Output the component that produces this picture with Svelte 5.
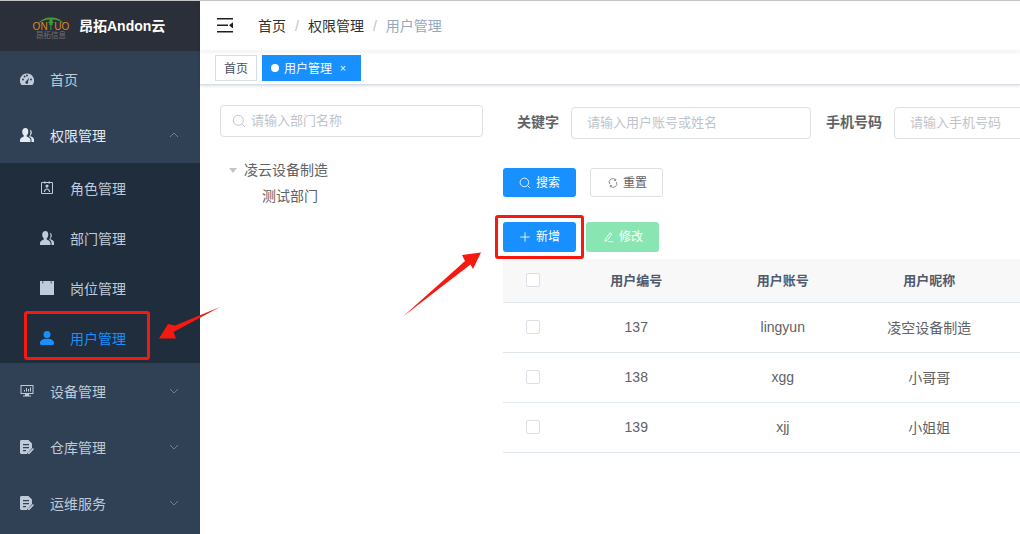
<script>
  const icons = {
    gauge: 'M7 1.500A7 7 0 0 0 1.600 13h10.800A7 7 0 0 0 7 1.500zM3 8.600a1 1 0 1 1 0-2 1 1 0 0 1 0 2zm1.600-3a1 1 0 1 1 0-2 1 1 0 0 1 0 2zm2.400-1a1 1 0 1 1 0-2 1 1 0 0 1 0 2zm0 7.400a1.600 1.600 0 0 1-.8-3l3.200-3.400-1.400 4.200A1.600 1.600 0 0 1 7 12zm4-3.400a1 1 0 1 1 0-2 1 1 0 0 1 0 2z',
    people: 'M5.500 0C3.500 0 2.200 1.600 2.200 3.800c0 1.500.6 2.800 1.600 3.600v1C2.400 9 0 10 0 12v2h10.500v-2c0-2-2.400-3-3.800-3.600v-1c1-.8 1.600-2.100 1.600-3.600C8.300 1.600 7.500 0 5.500 0zM9.500 1.500c1.500.3 2.300 1.500 2.300 3 0 1.200-.5 2.200-1.300 2.800v.9c1.200.5 3.500 1.400 3.500 3V14h-2.500v-2.300c0-1.300-1-2.400-2.300-3.200.8-1.100 1.300-2.600 1.300-4.200 0-1-.2-2-.8-2.800z',
    post: 'M0 0h2.500v2.500h.7V0h7.600v2.500h.7V0H14v14H0z',
    user: 'M7 0a3.500 3.500 0 1 1 0 7 3.500 3.500 0 0 1 0-7zM0 12c0-2.800 3-4.300 7-4.300s7 1.500 7 4.300v.8c0 .7-.5 1.200-1.200 1.200H1.200C.5 14 0 13.500 0 12.800z',
    doc: 'M1.500 0h7L12 3.500V8l-4.500 5-.5 1H1.500C.700 14 0 13.300 0 12.500v-11C0 .7.700 0 1.500 0zM3 4v1.300h6V4zm0 3v1.300h6V7zm0 3v1.300h3V10zM13 8l1 1-4.500 5H8v-1.200z'
  };
  const bottomMenu = [
    { label: '设备管理', icon: 'monitor' },
    { label: '仓库管理', icon: 'doc' },
    { label: '运维服务', icon: 'doc' }
  ];
  const subMenu = [
    { label: '角色管理', icon: 'role' },
    { label: '部门管理', icon: 'people' },
    { label: '岗位管理', icon: 'post' },
    { label: '用户管理', icon: 'user', active: true }
  ];
  const rows = [
    { id: 137, account: 'lingyun', nick: '凌空设备制造' },
    { id: 138, account: 'xgg', nick: '小哥哥' },
    { id: 139, account: 'xjj', nick: '小姐姐' }
  ];
</script>

{#snippet icon(name)}
  <svg class="mi" viewBox="0 0 14 14" aria-hidden="true">
    {#if name === 'role'}
      <path class="line" d="M1.500 1.500h11v11h-11z" />
      <path d="M4 .5h1.500v2H4zM8.500 .5H10v2H8.500zM7 3.500a1.600 1.600 0 1 1 0 3.200 1.600 1.600 0 0 1 0-3.200zM3.800 11c.2-2.200 1.400-3.600 3.200-3.600s3 1.400 3.200 3.600H9c-.2-1.300-.9-2.400-2-2.400S5.200 9.700 5 11z" />
    {:else if name === 'monitor'}
      <path d="M.5 1h13v9H9v1.500h2V12.500H3v-1h2V10H.5zM1.500 2v7h11V2zM4 7.500V6h1v1.500zM6 7.500V4h1v3.500zM8 7.500V5h1v2.500zM10 7.500V3.500h1v4z" />
    {:else}
      <path d={icons[name]} />
    {/if}
  </svg>
{/snippet}

{#snippet chevron(up)}
  <svg class="chev" viewBox="0 0 10 6" aria-hidden="true">
    <path d={up ? 'M1 5l4-4 4 4' : 'M1 1l4 4 4-4'} />
  </svg>
{/snippet}

<div class="shell">
  <aside class="sidebar">
    <div class="brand">
      <div class="logo">
        <svg class="arc" viewBox="0 0 32 9" aria-hidden="true">
          <path d="M3 8C6 3 11 1.500 16 1.500S26 3 29 8C25 4.500 21 3.500 17.500 3.500V9h-3V3.500C11 3.500 7 4.500 3 8z" />
        </svg>
        <span class="logo-en">ON<i>T</i>UO</span>
        <span class="logo-cn">昂拓信息</span>
      </div>
      <span class="brand-title">昂拓Andon云</span>
    </div>
    <div class="menu-item">{@render icon('gauge')}<span>首页</span></div>
    <div class="menu-item open">{@render icon('people')}<span>权限管理</span>{@render chevron(true)}</div>
    <div class="submenu">
      {#each subMenu as item}
        <div class="sub-item" class:active={item.active}>{@render icon(item.icon)}<span>{item.label}</span></div>
      {/each}
    </div>
    {#each bottomMenu as item}
      <div class="menu-item">{@render icon(item.icon)}<span>{item.label}</span>{@render chevron(false)}</div>
    {/each}
  </aside>

  <main class="main">
    <header class="navbar">
      <svg class="hamburger" viewBox="0 0 16 15" aria-hidden="true">
        <path d="M0 0h16v1.500H0zM0 6.500h11V8H0zM0 13h16v1.500H0zM16 4.200v6.200l-4-3.100z" />
      </svg>
      <nav class="crumbs">
        <span>首页</span><b>/</b><span>权限管理</span><b>/</b><span class="current">用户管理</span>
      </nav>
    </header>

    <div class="tags">
      <span class="tag">首页</span>
      <span class="tag on"><i class="dot"></i>用户管理<em>×</em></span>
    </div>

    <div class="content">
      <section class="tree-col">
        <div class="input tree-input">
          <svg class="search" viewBox="0 0 14 14" aria-hidden="true"><circle cx="6.300" cy="6.300" r="5" /><path d="M10 10l3 3" /></svg>
          <span class="ph">请输入部门名称</span>
        </div>
        <div class="tree-node root"><i class="caret"></i>凌云设备制造</div>
        <div class="tree-node child">测试部门</div>
      </section>

      <section class="list-col">
        <div class="query">
          <label for="kw">关键字</label>
          <div class="input wide" id="kw"><span class="ph">请输入用户账号或姓名</span></div>
          <label for="tel">手机号码</label>
          <div class="input wide" id="tel"><span class="ph">请输入手机号码</span></div>
        </div>

        <div class="actions query-actions">
          <span class="btn primary">
            <svg class="btn-i" viewBox="0 0 14 14" aria-hidden="true"><circle cx="6.300" cy="6.300" r="5" /><path d="M10 10l3 3" /></svg>搜索
          </span>
          <span class="btn plain reset">
            <svg class="btn-i small" viewBox="0 0 14 14" aria-hidden="true"><path d="M2.500 8.500A4.700 4.700 0 0 1 10.500 3M11.500 5.500A4.700 4.700 0 0 1 3.500 11M10.800 1v2.500H8.300M3.200 13v-2.500h2.500" /></svg>重置
          </span>
        </div>

        <div class="actions">
          <span class="btn primary">
            <svg class="btn-i" viewBox="0 0 14 14" aria-hidden="true"><path d="M7 1.500v11M1.500 7h11" /></svg>新增
          </span>
          <span class="btn success">
            <svg class="btn-i" viewBox="0 0 14 14" aria-hidden="true"><path d="M4 9.500L9.500 2l2 1.500L6 11l-2.500 1zM7 12.500h6" /></svg>修改
          </span>
        </div>

        <table>
          <colgroup><col class="c0" /><col class="c1" /><col class="c1" /><col class="c1" /><col class="c1" /></colgroup>
          <thead>
            <tr><th><i class="check"></i></th><th>用户编号</th><th>用户账号</th><th>用户昵称</th><th></th></tr>
          </thead>
          <tbody>
            {#each rows as row}
              <tr><td><i class="check"></i></td><td>{row.id}</td><td>{row.account}</td><td>{row.nick}</td><td></td></tr>
            {/each}
          </tbody>
        </table>
      </section>
    </div>
  </main>

  <div class="mark mark-menu"></div>
  <div class="mark mark-add"></div>
  <svg class="arrows" viewBox="0 0 1020 534" aria-hidden="true">
    <polygon points="220,307 175,325.500 168,324 159,338.500 176,338.500 173.500,332" />
    <polygon points="403,316.500 465,261 462,255 481,252.500 473,269 470.500,264.500" />
  </svg>
</div>

<style>
  :global(body) {
    margin: 0;
    overflow: hidden;
    background: #fff;
  }

  .shell {
    position: relative;
    display: flex;
    width: 1020px;
    height: 534px;
    box-sizing: border-box;
    border-top: 1px solid #c4c4c4;
    overflow: hidden;
    font-family: "Liberation Sans", "Noto Sans CJK SC", sans-serif;
    font-size: 14px;
    color: #606266;
  }

  .sidebar {
    flex: 0 0 200px;
    background: #304156;
    color: #bfcbd9;
  }

  .brand {
    display: flex;
    align-items: center;
    height: 50px;
    padding-left: 35px;
    background: #2b2f3a;
  }

  .logo {
    display: flex;
    flex-direction: column;
    align-items: center;
    width: 32px;
    margin: 4px 12px 0 0;
  }

  .arc {
    width: 32px;
    height: 9px;
    margin-bottom: -3px;
    fill: #3f9b39;
  }

  .logo-en {
    font-size: 10px;
    line-height: 9px;
    letter-spacing: .2px;
    color: #d98a1c;
  }

  .logo-en i {
    font-style: normal;
    color: #3f9b39;
  }

  .logo-cn {
    margin-top: 1px;
    font-size: 7.500px;
    line-height: 8px;
    color: #6d7077;
  }

  .brand-title {
    padding-bottom: 2px;
    font-size: 14px;
    font-weight: 700;
    color: #fff;
  }

  .menu-item,
  .sub-item {
    display: flex;
    align-items: center;
  }

  .menu-item {
    position: relative;
    height: 56px;
    padding-left: 20px;
  }

  .sub-item {
    height: 50px;
    padding-left: 40px;
  }

  .submenu {
    background: #1f2d3d;
  }

  .mi {
    flex: none;
    width: 14px;
    height: 14px;
    margin-right: 16px;
    fill: currentColor;
  }

  .line {
    fill: none;
    stroke: currentColor;
  }

  .open {
    color: #e4eaf2;
  }

  .active {
    color: #1890ff;
  }

  .chev {
    position: absolute;
    left: 169px;
    top: 25px;
    width: 10px;
    height: 6px;
    fill: none;
    stroke: #717e8e;
    stroke-width: 1;
  }

  .main {
    flex: 1;
    min-width: 0;
  }

  .navbar {
    position: relative;
    display: flex;
    align-items: center;
    height: 50px;
    padding-left: 17px;
    box-shadow: 0 1px 4px rgba(0, 21, 41, .08);
  }

  .hamburger {
    width: 16px;
    height: 15px;
    margin: 0 25px 1px 0;
    fill: #1f1f1f;
  }

  .crumbs {
    display: flex;
    align-items: baseline;
    padding-bottom: 2px;
    color: #303133;
  }

  .crumbs b {
    margin: 0 9px;
    font-weight: 400;
    color: #c0c4cc;
  }

  .crumbs .current {
    color: #97a8be;
  }

  .tags {
    position: relative;
    display: flex;
    gap: 5px;
    box-sizing: border-box;
    height: 34px;
    padding: 4px 0 0 15px;
    border-bottom: 1px solid #d8dce5;
    box-shadow: 0 1px 3px 0 rgba(0, 0, 0, .12), 0 0 3px 0 rgba(0, 0, 0, .04);
  }

  .tag {
    display: flex;
    align-items: center;
    box-sizing: border-box;
    height: 26px;
    padding: 0 8px 2px;
    border: 1px solid #d8dce5;
    font-size: 12px;
    color: #495060;
  }

  .tag.on {
    width: 99px;
    border-color: #1890ff;
    background: #1890ff;
    color: #fff;
  }

  .dot {
    width: 8px;
    height: 8px;
    margin: 2px 5px 0 0;
    border-radius: 50%;
    background: #fff;
  }

  .tag em {
    margin: 2px 0 0 8px;
    font-style: normal;
    font-size: 10px;
  }

  .content {
    display: flex;
    padding: 20px 0 0 20px;
  }

  .tree-col {
    flex: 0 0 263px;
    margin-right: 20px;
  }

  .input {
    display: flex;
    align-items: center;
    box-sizing: border-box;
    height: 32px;
    padding-bottom: 4px;
    border: 1px solid #dcdfe6;
    border-radius: 4px;
    background: #fff;
    font-size: 13px;
  }

  .tree-input {
    padding-left: 11px;
  }

  .search {
    flex: none;
    width: 14px;
    height: 14px;
    margin: 3px 5px 0 0;
    fill: none;
    stroke: #c0c4cc;
  }

  .ph {
    white-space: nowrap;
    color: #c0c4cc;
  }

  .tree-node {
    display: flex;
    align-items: center;
    height: 26px;
    padding-bottom: 2px;
    box-sizing: border-box;
  }

  .root {
    margin-top: 20px;
    padding-left: 9px;
  }

  .child {
    padding-left: 42px;
  }

  .caret {
    width: 0;
    height: 0;
    margin: 2px 7px 0 0;
    border-left: 4px solid transparent;
    border-right: 4px solid transparent;
    border-top: 5px solid #c0c4cc;
  }

  .list-col {
    flex: none;
    width: 800px;
  }

  .query {
    display: flex;
    align-items: center;
    margin-top: 2px;
  }

  .query label {
    margin-right: 12px;
    margin-bottom: 4px;
    font-weight: 700;
    white-space: nowrap;
  }

  .query label:first-child {
    margin-left: 14px;
  }

  .wide {
    flex: none;
    width: 240px;
    padding-left: 15px;
    margin-right: 15px;
  }

  .actions {
    display: flex;
    gap: 10px;
    margin-bottom: 7px;
  }

  .query-actions {
    gap: 14px;
    margin-top: 29px;
    margin-bottom: 25px;
  }

  .btn {
    display: flex;
    align-items: center;
    justify-content: center;
    box-sizing: border-box;
    width: 73px;
    height: 30px;
    padding-bottom: 3px;
    border-radius: 3px;
    font-size: 12px;
    color: #fff;
  }

  .query-actions .btn {
    height: 29px;
    padding-bottom: 2px;
  }

  .primary {
    background: #1890ff;
  }

  .success {
    background: #89e6b2;
  }

  .plain {
    border: 1px solid #dcdfe6;
    color: #606266;
  }

  .reset {
    padding-left: 2px;
  }

  .btn-i {
    width: 12px;
    height: 12px;
    margin: 2px 5px 0 0;
    fill: none;
    stroke: currentColor;
  }

  .small {
    width: 10px;
    height: 10px;
  }

  table {
    width: 646px;
    table-layout: fixed;
    border-collapse: collapse;
    text-align: center;
  }

  .c0 {
    width: 60px;
  }

  .c1 {
    width: 146.500px;
  }

  th {
    height: 43px;
    padding: 0 0 2px;
    box-sizing: border-box;
    border-bottom: 1px solid #dfe6ec;
    background: #f8f8f9;
    font-size: 13px;
    font-weight: 700;
    color: #515a6e;
  }

  th .check {
    position: relative;
    top: 1px;
  }

  td {
    height: 50px;
    padding: 0;
    box-sizing: border-box;
    border-bottom: 1px solid #dfe6ec;
  }

  .check {
    display: block;
    box-sizing: border-box;
    width: 14px;
    height: 14px;
    margin: 0 auto;
    border: 1px solid #dcdfe6;
    border-radius: 2px;
    background: #fff;
  }

  .mark {
    position: absolute;
    box-sizing: border-box;
    border: 3px solid #f5190f;
    border-radius: 3px;
  }

  .mark-menu {
    left: 24px;
    top: 310px;
    width: 126px;
    height: 49px;
  }

  .mark-add {
    left: 495px;
    top: 214px;
    width: 89px;
    height: 44px;
  }

  .arrows {
    position: absolute;
    left: 0;
    top: -1px;
    width: 1020px;
    height: 534px;
    fill: #f5190f;
    pointer-events: none;
  }
</style>
